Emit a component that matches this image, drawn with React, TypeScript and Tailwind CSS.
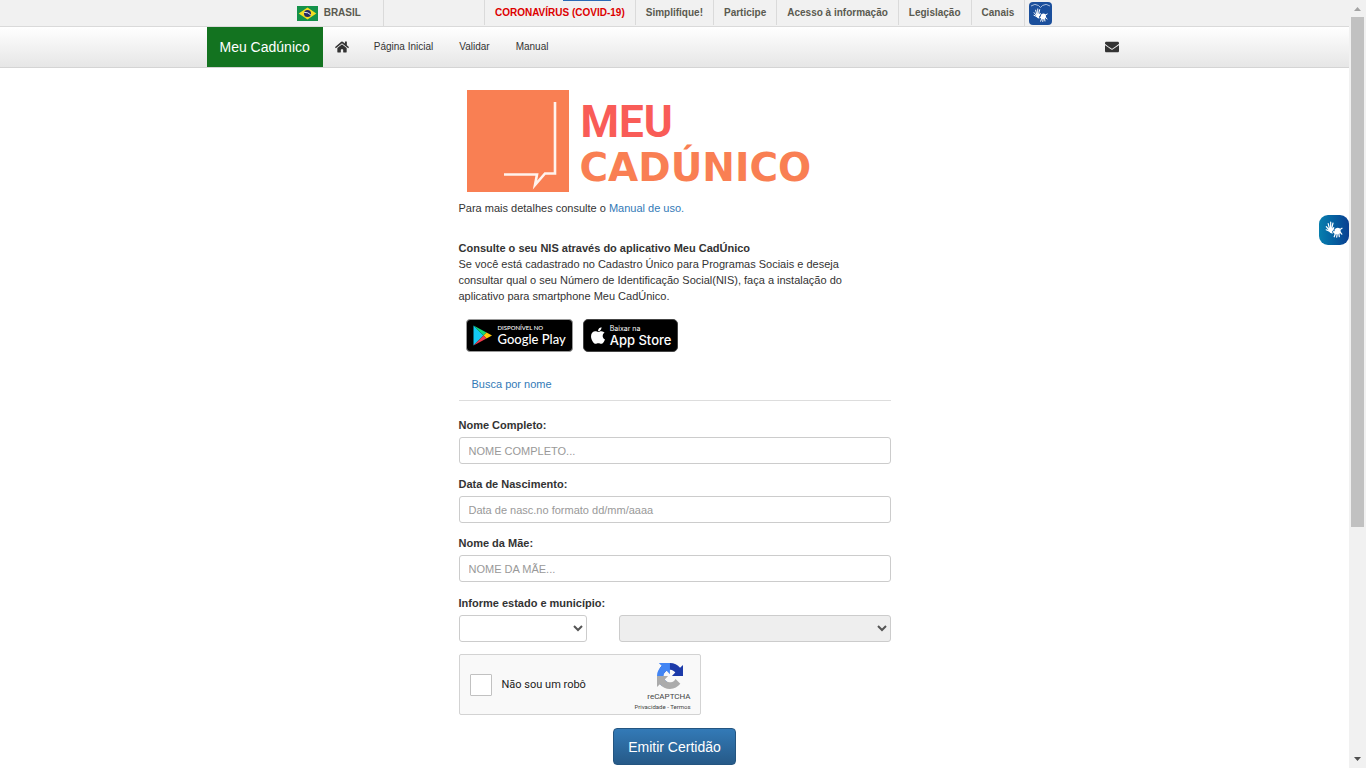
import React from "react";
import { FaApple, FaEnvelope, FaHome } from "react-icons/fa";

const govLinks = ["Simplifique!", "Participe", "Acesso à informação", "Legislação", "Canais"];

const fields = [
  { id: "nome", label: "Nome Completo:", placeholder: "NOME COMPLETO..." },
  { id: "nascimento", label: "Data de Nascimento:", placeholder: "Data de nasc.no formato dd/mm/aaaa" },
  { id: "mae", label: "Nome da Mãe:", placeholder: "NOME DA MÃE..." },
];

function BrazilFlag() {
  return (
    <svg viewBox="0 0 21 15" className="h-[15px] w-[21px]" aria-hidden="true">
      <rect width="21" height="15" fill="#14924a" />
      <path d="M10.5 1.5 19.3 7.5 10.5 13.5 1.7 7.5Z" fill="#f3dd22" />
      <circle cx="10.5" cy="7.5" r="3.5" fill="#252a63" />
      <path d="M7.2 6.4Q11 6 13.7 8.8" fill="none" stroke="#fff" strokeWidth="0.9" />
    </svg>
  );
}

function SigningHands(props: React.SVGProps<SVGSVGElement>) {
  return (
    <svg viewBox="0 0 18 18" fill="none" stroke="currentColor" strokeLinecap="round" aria-hidden="true" {...props}>
      <path
        d="M4.600 8L3.200 2.600M5.600 7L5.700 1.200M6.800 7L8 2M4.200 9L1.300 5.600M4.400 10.200L1.200 8.800"
        strokeWidth="1.200"
      />
      <path d="M3.900 8.200Q5.500 6.200 7.600 7.200L8.600 6Q9.600 5.800 9.300 7L8.300 9.400Q6.800 9.400 7.200 11.200L8 12.400Q5.400 12.800 4.200 10.800Z" fill="currentColor" stroke="none" />
      <path d="M9.600 8.200Q12 5.600 15 7.400Q16.400 9.600 15 12.200Q12.600 14 9.800 13L8 11.200Q7.800 9.800 9.600 10.200Z" fill="currentColor" stroke="none" />
      <path d="M10.400 12.500L9.200 15.800M12.200 12.800L11.700 16.200M13.800 12.200L14.300 15.600M15 8.400L17 7.200M15 11L16.800 13.200" strokeWidth="1.200" />
    </svg>
  );
}

function GovBar() {
  return (
    <div className="relative flex h-[27px] justify-center border-b border-[#dadada] bg-[#f1f1f1] text-[10px] font-bold text-[#5a5a50]">
      <div className="absolute left-[563px] top-0 h-px w-12 bg-[#2a69b5]" />
      <div className="flex">
        <a href="#brasil" className="mr-[100px] flex items-center gap-[6px] border-r border-[#dadada] pr-[22px]">
          <BrazilFlag />
          BRASIL
        </a>
        <nav className="flex pb-px">
          <a href="#covid" className="flex items-center border-l border-[#dadada] px-[10px] text-[#dd0000]">
            CORONAVÍRUS (COVID-19)
          </a>
          {govLinks.map((label) => (
            <a key={label} href="#gov" className="flex items-center border-l border-[#dadada] px-[10px]">
              {label}
            </a>
          ))}
        </nav>
        <a
          href="#vlibras"
          aria-label="VLibras"
          className="flex items-center border-l border-[#dadada] pl-1 text-white"
        >
          <svg viewBox="0 0 23 23" className="h-[23px] w-[23px]" aria-hidden="true">
            <rect width="23" height="23" rx="4" fill="#1b4f9c" />
            <path d="M2 4Q6 1 9.500 3.500L11.500 5.500L13.500 3.500Q17 1 21 4" fill="none" stroke="#b9cbe4" strokeWidth="0.9" />
            <SigningHands x="4" y="6" width="15" height="15" />
          </svg>
        </a>
      </div>
    </div>
  );
}

function NavBar() {
  return (
    <header className="border-b border-[#d4d4d4] bg-linear-to-b from-white to-[#e6e6e6]">
      <div className="mx-auto flex h-10 max-w-[936px] items-stretch text-[10px] text-[#333]">
        <a href="#inicio" className="flex items-center bg-[#137320] px-[13px] text-[14px] text-white">
          Meu Cadúnico
        </a>
        <a href="#home" aria-label="Início" className="flex items-center px-3">
          <FaHome className="h-[14px] w-[14px]" />
        </a>
        <nav className="flex items-stretch">
          <a href="#pagina" className="flex items-center px-[13px]">Página Inicial</a>
          <a href="#validar" className="flex items-center px-[13px]">Validar</a>
          <a href="#manual" className="flex items-center px-[13px]">Manual</a>
        </nav>
        <a href="#contato" aria-label="Contato" className="mr-3 ml-auto flex items-center px-3">
          <FaEnvelope className="h-[14px] w-[14px]" />
        </a>
      </div>
    </header>
  );
}

function Logo() {
  return (
    <div className="ml-2 flex items-start gap-[11px]">
      <svg viewBox="0 0 102 102" className="h-[102px] w-[102px]" aria-hidden="true">
        <rect width="102" height="102" fill="#f97f53" />
        <path d="M88 12V83.500H78L68 95L70 84.500H37" fill="none" stroke="#fff3ee" strokeWidth="2.600" />
      </svg>
      <div className="pt-[9px]">
        <div className="pl-px font-['Roboto',sans-serif] text-[44px] leading-[46px] font-bold text-[#f95c57]">MEU</div>
        <div className="font-['DejaVu_Sans',sans-serif] text-[39px] leading-[46px] font-bold text-[#f97f53]">CADÚNICO</div>
      </div>
    </div>
  );
}

function StoreBadges() {
  return (
    <div className="mt-[15px] ml-[7px] flex items-center gap-[10px] text-white">
      <a href="#google-play" className="flex h-[33px] items-center gap-[6px] rounded-[4px] border border-[#999] bg-black px-[6px]">
        <svg viewBox="0 0 19 21" className="h-[21px] w-[19px]" aria-hidden="true">
          <path d="M0.500 0.500V20.500L10.500 10.500Z" fill="#12c9f5" />
          <path d="M0.500 0.500L13.500 7.500L10.500 10.500Z" fill="#12d877" />
          <path d="M13.500 7.500L19 10.500L13.500 13.500L10.500 10.500Z" fill="#fdc90a" />
          <path d="M0.500 20.500L13.500 13.500L10.500 10.500Z" fill="#ee3a4c" />
        </svg>
        <span className="flex flex-col font-['Lato',sans-serif]">
          <span className="text-[6px] leading-[8px] font-medium">DISPONÍVEL NO</span>
          <span className="text-[13px] leading-[15px] font-medium">Google Play</span>
        </span>
      </a>
      <a href="#app-store" className="flex h-[33px] items-center gap-1 rounded-[5px] border border-[#444] bg-black px-[6px]">
        <FaApple className="h-[19px] w-[16px]" />
        <span className="flex flex-col font-['Inter',sans-serif]">
          <span className="text-[7px] leading-[8px]">Baixar na</span>
          <span className="text-[13px] leading-[14px] font-medium">App Store</span>
        </span>
      </a>
    </div>
  );
}

function Recaptcha() {
  return (
    <div className="mt-3 flex h-[61px] w-[242px] items-center rounded-[2px] border border-[#d3d3d3] bg-[#f9f9f9] pr-[9px] pl-[10px] font-['Roboto',sans-serif]">
      <input
        id="robo"
        type="checkbox"
        className="mr-[10px] h-[22px] w-[22px] appearance-none rounded-[1px] border border-[#c1c1c1] bg-white"
      />
      <label htmlFor="robo" className="text-[11px] text-[#222]">Não sou um robô</label>
      <div className="ml-auto flex flex-col items-end pt-1 text-[#444]">
        <svg viewBox="0 0 64 64" className="mr-2 h-[26px] w-[26px]" aria-hidden="true">
          <path fill="#1c3aa9" d="M64 31.955l-.033-1.37V4.687l-7.16 7.16C50.948 4.674 42.033.093 32.05.093c-10.4 0-19.622 4.96-25.458 12.64l11.736 11.86a15.55 15.55 0 0 1 4.754-5.334c2.05-1.6 4.952-2.906 8.968-2.906.485 0 .86.057 1.135.163 4.976.393 9.288 3.14 11.828 7.124l-8.307 8.307L64 31.953" />
          <path fill="#4285f4" d="M31.862.094l-1.37.033H4.594l7.16 7.16C4.58 13.147 0 22.06 0 32.046c0 10.4 4.96 19.622 12.64 25.458L24.5 45.768a15.55 15.55 0 0 1-5.334-4.754c-1.6-2.05-2.906-4.952-2.906-8.968 0-.485.057-.86.163-1.135.393-4.976 3.14-9.288 7.124-11.828l8.307 8.307L31.86.095" />
          <path fill="#ababab" d="M.001 32.045l.033 1.37v25.898l7.16-7.16c5.86 7.173 14.774 11.754 24.76 11.754 10.4 0 19.622-4.96 25.458-12.64l-11.736-11.86a15.55 15.55 0 0 1-4.754 5.334c-2.05 1.6-4.952 2.906-8.968 2.906-.485 0-.86-.057-1.135-.163-4.976-.393-9.288-3.14-11.828-7.124l8.307-8.307c-10.522.04-22.4.066-27.295-.005" />
        </svg>
        <span className="mt-[3px] text-[8px] leading-[10px]">reCAPTCHA</span>
        <span className="text-[6px] leading-[9px]">
          <a href="#privacidade">Privacidade</a> - <a href="#termos">Termos</a>
        </span>
      </div>
    </div>
  );
}

function CertificateForm() {
  return (
    <form className="mt-4" onSubmit={(e) => e.preventDefault()}>
      {fields.map((f) => (
        <div key={f.id} className="mb-3">
          <label htmlFor={f.id} className="mb-1 block font-bold">{f.label}</label>
          <input
            id={f.id}
            type="text"
            placeholder={f.placeholder}
            className="block h-[27px] w-full rounded-[3px] border border-[#ccc] bg-white px-[9px] placeholder:text-[#999]"
          />
        </div>
      ))}
      <div className="pt-px">
        <label htmlFor="estado" className="mb-1 block font-bold">Informe estado e município:</label>
        <div className="flex gap-8">
          <select id="estado" className="h-[27px] w-32 rounded-[3px] border border-[#ccc] bg-white pr-px text-[#555]">
            <option value=""></option>
          </select>
          <select
            aria-label="Município"
            disabled
            className="h-[27px] flex-1 rounded-[3px] border border-[#ccc] bg-[#eee] pr-px text-[#555] opacity-100"
          >
            <option value=""></option>
          </select>
        </div>
      </div>
      <Recaptcha />
      <div className="mt-[13px] flex justify-center">
        <button
          type="submit"
          className="h-[37px] rounded-[4px] border border-[#245580] bg-linear-to-b from-[#337ab7] to-[#265a88] px-[14px] text-[14px] text-white"
        >
          Emitir Certidão
        </button>
      </div>
    </form>
  );
}

function ScrollTrack() {
  return (
    <div className="flex h-screen w-[17px] flex-col items-center bg-[#f1f1f1]" aria-hidden="true">
      <svg viewBox="0 0 17 17" className="h-[17px] w-[17px]">
        <path d="M5 11L8.500 7L12 11Z" fill="#a3a3a3" />
      </svg>
      <div className="h-[510px] w-[13px] bg-[#c1c1c1]" />
      <svg viewBox="0 0 17 17" className="mt-auto h-[17px] w-[17px]">
        <path d="M5 6L8.500 10L12 6Z" fill="#505050" />
      </svg>
    </div>
  );
}

export default function App() {
  return (
    <div className="flex h-screen overflow-hidden bg-white font-['Liberation_Sans',Arial,sans-serif] text-[11px] leading-4 text-[#333]">
      <div className="relative min-w-0 flex-1">
        <GovBar />
        <NavBar />
        <main className="mx-auto max-w-[432px] pt-[22px]">
          <Logo />
          <p className="mt-2">
            Para mais detalhes consulte o <a href="#manual-uso" className="text-[#337ab7]">Manual de uso.</a>
          </p>
          <h1 className="mt-6 font-bold">Consulte o seu NIS através do aplicativo Meu CadÚnico</h1>
          <p className="pr-8">
            Se você está cadastrado no Cadastro Único para Programas Sociais e deseja consultar qual o seu Número de
            Identificação Social(NIS), faça a instalação do aplicativo para smartphone Meu CadÚnico.
          </p>
          <StoreBadges />
          <div className="mt-4 border-b border-[#ddd] px-[13px] py-2">
            <a href="#busca" className="block text-[#337ab7]">Busca por nome</a>
          </div>
          <CertificateForm />
        </main>
        <button
          type="button"
          aria-label="Acessibilidade em Libras"
          className="absolute top-[215px] right-0 flex h-[30px] w-[30px] items-center justify-center rounded-[9px] bg-linear-to-r from-[#087fae] to-[#0b3f91] text-white"
        >
          <SigningHands className="h-[18px] w-[18px]" />
        </button>
      </div>
      <ScrollTrack />
    </div>
  );
}
